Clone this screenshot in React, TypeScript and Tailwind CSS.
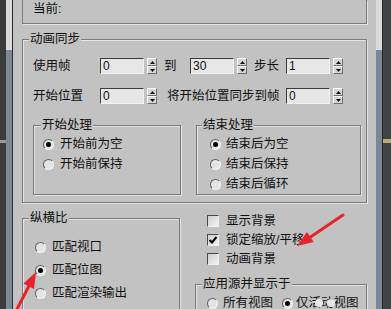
import React from "react";

const Spinner = () => (
  <div className="ml-[3px] w-[10px] h-[16px] flex flex-col">
    <div className="h-[8px] bg-[#d6d6d6] border border-t-white border-l-white border-b-[#6e6e6e] border-r-[#6e6e6e] flex items-center justify-center">
      <svg width="5" height="3" viewBox="0 0 5 3">
        <path d="M2.5 0 L5 3 L0 3 Z" fill="#111" />
      </svg>
    </div>
    <div className="h-[8px] bg-[#d6d6d6] border border-t-white border-l-white border-b-[#6e6e6e] border-r-[#6e6e6e] flex items-center justify-center">
      <svg width="5" height="3" viewBox="0 0 5 3">
        <path d="M0 0 L5 0 L2.5 3 Z" fill="#111" />
      </svg>
    </div>
  </div>
);

const Field = ({ value }: { value: string }) => (
  <div className="flex items-center">
    <div className="w-[44px] h-[16px] bg-[#e6e6e6] border border-t-[#3c3c3c] border-l-[#3c3c3c] border-b-[#f2f2f2] border-r-[#f2f2f2] text-[12px] leading-[14px] pl-[2px]">
      {value}
    </div>
    <Spinner />
  </div>
);

const Radio = ({ checked }: { checked?: boolean }) => (
  <span className="w-[11px] h-[11px] shrink-0 rounded-full border border-t-[#5e5e5e] border-l-[#5e5e5e] border-b-[#f4f4f4] border-r-[#f4f4f4] bg-[#e4e4e4] flex items-center justify-center">
    {checked && <span className="w-[5px] h-[5px] rounded-full bg-black" />}
  </span>
);

const Check = ({ checked }: { checked?: boolean }) => (
  <span className="w-[12px] h-[12px] shrink-0 border border-t-[#4a4a4a] border-l-[#4a4a4a] border-b-[#f0f0f0] border-r-[#f0f0f0] bg-gradient-to-br from-[#cfcfcf] to-[#f2f2f2] flex items-center justify-center">
    {checked && (
      <svg width="10" height="10" viewBox="0 0 10 10">
        <path d="M1.5 5 L4 7.5 L8.5 2" stroke="#000" strokeWidth="2" fill="none" />
      </svg>
    )}
  </span>
);

const Title = ({ text, left }: { text: string; left: string }) => (
  <span className={`absolute -top-[9px] ${left} px-[1px] bg-[#c2c2c2] leading-[16px]`}>{text}</span>
);

const groupBorder =
  "relative border border-[#7a7a7a] shadow-[inset_1px_1px_0_#e2e2e2,1px_1px_0_#e2e2e2]";

export default function App() {
  return (
    <div className="relative w-[391px] h-[309px] overflow-hidden flex bg-[#404246] text-[12.5px] text-[#111] font-['Liberation_Sans','Noto_Sans_CJK_SC',sans-serif]">
      <div className="w-[6px] bg-[#3b3b3b] flex flex-col">
        <div className="h-[140px]" />
        <div className="h-[3px] bg-[#9a9a9a]" />
      </div>
      <div className="w-[6px] flex flex-col">
        <div className="h-[50px] bg-[#d8dadc]" />
        <div className="flex-1 bg-[#7c8896]" />
      </div>
      <div className="w-[1px] bg-[#2c2c2c]" />

      <div className="w-[363px] bg-[#c2c2c2] flex flex-col">
        <div className="h-[3px] bg-[#e8e8e8]" />
        <div className="px-[9px]">
          <div className="h-[24px] border-x border-b border-[#7a7a7a] shadow-[1px_1px_0_#e2e2e2] pl-[10px] pt-[1px] leading-[16px]">
            当前:
          </div>

          <div className={`${groupBorder} mt-[15px] h-[164px]`}>
            <Title text="动画同步" left="left-[6px]" />
            <div className="pt-[18px] pl-[10px]">
              <div className="flex items-center h-[16px]">
                <span className="w-[67px]">使用帧</span>
                <Field value="0" />
                <span className="ml-[7px] w-[26px]">到</span>
                <Field value="30" />
                <span className="ml-[7px] w-[32px]">步长</span>
                <Field value="1" />
              </div>
              <div className="flex items-center h-[16px] mt-[14px]">
                <span className="w-[67px]">开始位置</span>
                <Field value="0" />
                <span className="ml-[10px] w-[119px]">将开始位置同步到帧</span>
                <Field value="0" />
              </div>
              <div className="flex mt-[21px]">
                <div className={`${groupBorder} w-[148px] h-[70px]`}>
                  <Title text="开始处理" left="left-[7px]" />
                  <div className="pt-[11px] pl-[9px] flex flex-col gap-[6px]">
                    <div className="flex items-center h-[14px] gap-[6px]">
                      <Radio checked />
                      <span>开始前为空</span>
                    </div>
                    <div className="flex items-center h-[14px] gap-[6px]">
                      <Radio />
                      <span>开始前保持</span>
                    </div>
                  </div>
                </div>
                <div className={`${groupBorder} ml-[15px] w-[165px] h-[70px]`}>
                  <Title text="结束处理" left="left-[5px]" />
                  <div className="pt-[11px] pl-[13px] flex flex-col gap-[6px]">
                    <div className="flex items-center h-[14px] gap-[5px]">
                      <Radio checked />
                      <span>结束后为空</span>
                    </div>
                    <div className="flex items-center h-[14px] gap-[5px]">
                      <Radio />
                      <span>结束后保持</span>
                    </div>
                    <div className="flex items-center h-[14px] gap-[5px]">
                      <Radio />
                      <span>结束后循环</span>
                    </div>
                  </div>
                </div>
              </div>
            </div>
          </div>

          <div className="flex items-start">
            <div className={`${groupBorder} mt-[15px] w-[159px] h-[120px]`}>
              <Title text="纵横比" left="left-[6px]" />
              <div className="pt-[21px] pl-[12px] flex flex-col gap-[9px]">
                <div className="flex items-center h-[14px] gap-[6px]">
                  <Radio />
                  <span>匹配视口</span>
                </div>
                <div className="flex items-center h-[14px] gap-[6px]">
                  <Radio checked />
                  <span>匹配位图</span>
                </div>
                <div className="flex items-center h-[14px] gap-[6px]">
                  <Radio />
                  <span>匹配渲染输出</span>
                </div>
              </div>
            </div>

            <div className="ml-[15px] w-[173px]">
              <div className="pt-[12px] pl-[12px] flex flex-col gap-[7px]">
                <div className="flex items-center h-[12px] gap-[7px]">
                  <Check />
                  <span>显示背景</span>
                </div>
                <div className="flex items-center h-[12px] gap-[7px]">
                  <Check checked />
                  <span>锁定缩放/平移</span>
                </div>
                <div className="flex items-center h-[12px] gap-[7px]">
                  <Check />
                  <span>动画背景</span>
                </div>
              </div>
              <div className={`${groupBorder} mt-[19px] h-[60px]`}>
                <Title text="应用源并显示于" left="left-[6px]" />
                <div className="pt-[11px] pl-[11px] flex items-center h-[25px]">
                  <Radio />
                  <span className="ml-[5px]">所有视图</span>
                  <span className="ml-[9px]">
                    <Radio checked />
                  </span>
                  <span className="ml-[3px]">仅活动视图</span>
                </div>
              </div>
            </div>
          </div>
        </div>
      </div>

      <div className="w-[6px] flex flex-col">
        <div className="h-[50px] bg-[#d8dadc]" />
        <div className="flex-1 bg-[#7a8694]" />
      </div>
      <div className="w-[1px] bg-[#2a2a2a]" />
      <div className="flex-1 flex flex-col">
        <div className="h-[139px]" />
        <div className="h-[4px] bg-[#b8b070]" />
      </div>

      <svg className="absolute inset-0 pointer-events-none" width="391" height="309" viewBox="0 0 391 309">
        <circle cx="319" cy="303" r="4" fill="#e6e6e6" />
        <circle cx="331" cy="303" r="4" fill="#e6e6e6" />
        <line x1="343" y1="215" x2="309" y2="238" stroke="#e5242b" strokeWidth="3" strokeLinecap="round" />
        <polygon points="297,246 306.9,232.1 313.7,242.1" fill="#e5242b" />
        <line x1="15" y1="313" x2="30" y2="284" stroke="#e5242b" strokeWidth="3" strokeLinecap="round" />
        <polygon points="36,272 34,289 23.4,283.5" fill="#e5242b" />
      </svg>
    </div>
  );
}
